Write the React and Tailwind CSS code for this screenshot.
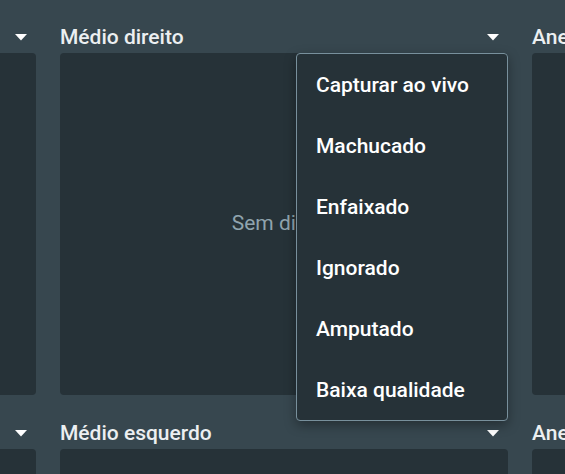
import React from "react";

const Arrow = () => (
  <svg width="12" height="7" viewBox="0 0 12 7" className="shrink-0">
    <polygon points="0,0 12,0 6,6.5" fill="#ffffff" />
  </svg>
);

const Cell = ({ title, empty }) => (
  <div className="flex flex-col">
    <div className="h-[36px] pt-[4px] flex items-center justify-between pr-[9px]">
      <span className="text-[21px] font-medium text-[#eceff1] leading-none whitespace-nowrap">{title}</span>
      <Arrow />
    </div>
    <div className="h-[342px] rounded-[4px] bg-[#263238] flex items-center justify-center">
      {empty && <span className="text-[21px] text-[#90a4ae]">Sem digital</span>}
    </div>
  </div>
);

const items = ["Capturar ao vivo", "Machucado", "Enfaixado", "Ignorado", "Amputado", "Baixa qualidade"];

export default function App() {
  return (
    <div
      className="w-[565px] h-[474px] overflow-hidden bg-[#37474f] relative"
      style={{ fontFamily: "Roboto, 'Liberation Sans', sans-serif" }}
    >
      <div className="flex gap-[24px] ml-[-412px] pt-[17px]">
        <div className="w-[448px] shrink-0 flex flex-col gap-[18px]">
          <Cell title="Médio esquerdo" />
          <Cell title="Médio esquerdo" />
        </div>
        <div className="w-[448px] shrink-0 flex flex-col gap-[18px] relative">
          <Cell title="Médio direito" empty />
          <Cell title="Médio esquerdo" empty />
          <div className="absolute left-[236px] top-[36px] w-[212px] h-[368px] pt-[1px] overflow-hidden bg-[#263238] border border-[#78909c] rounded-[4px] shadow-[0_4px_12px_rgba(0,0,0,0.35)] flex flex-col">
            {items.map((t) => (
              <div key={t} className="h-[61px] shrink-0 flex items-center pl-[19px] text-[21px] font-medium text-white whitespace-nowrap">
                {t}
              </div>
            ))}
          </div>
        </div>
        <div className="w-[448px] shrink-0 flex flex-col gap-[18px]">
          <Cell title="Anelar direito" />
          <Cell title="Anelar esquerdo" />
        </div>
      </div>
    </div>
  );
}
